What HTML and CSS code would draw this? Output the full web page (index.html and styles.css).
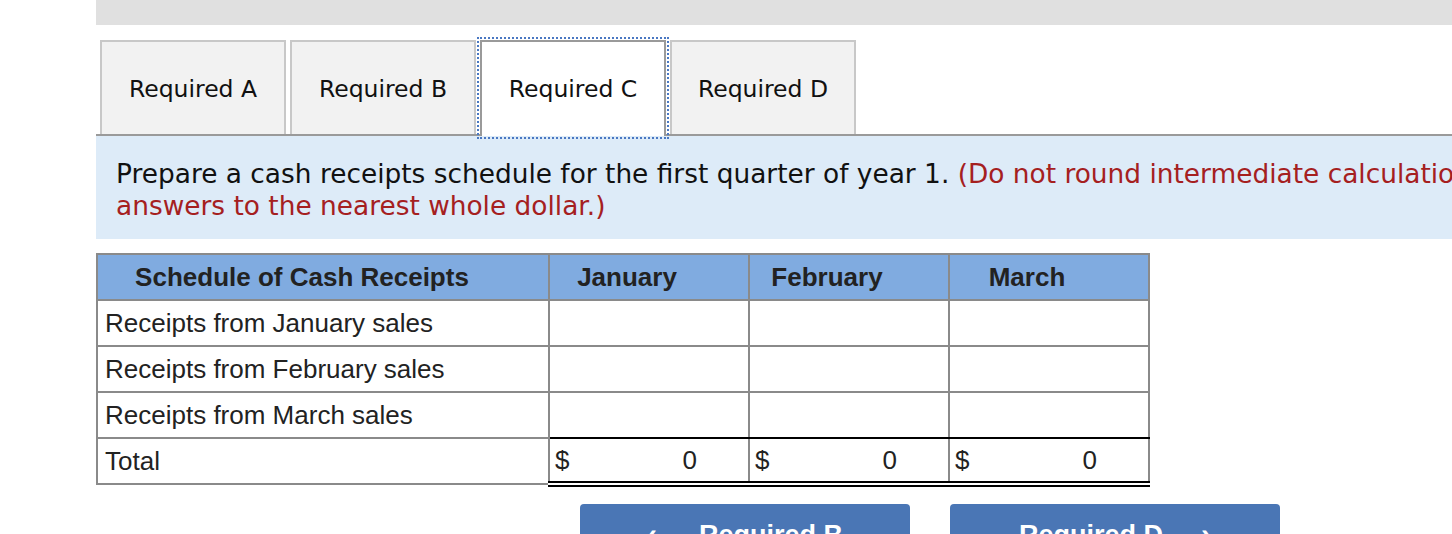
FILE: index.html
```html
<!DOCTYPE html>
<html lang="en">
<head>
<meta charset="utf-8">
<title>Cash receipts schedule</title>
<link rel="stylesheet" href="styles.css">
</head>
<body>
<div class="page">
  <div class="topbar"></div>
  <div class="tabs">
    <div class="tab">Required A</div>
    <div class="tab">Required B</div>
    <div class="tab active">Required C</div>
    <div class="tab">Required D</div>
  </div>
  <div class="panel">
    <p class="instructions">Prepare a cash receipts schedule for the first quarter of year 1. <span class="note">(Do not round intermediate calculations. Round your final<br>answers to the nearest whole dollar.)</span></p>
  </div>
  <table class="schedule">
    <thead>
      <tr>
        <th class="label">Schedule of Cash Receipts</th>
        <th class="val">January</th>
        <th class="val">February</th>
        <th class="val">March</th>
      </tr>
    </thead>
    <tbody>
      <tr>
        <td class="label">Receipts from January sales</td>
        <td class="val"></td><td class="val"></td><td class="val"></td>
      </tr>
      <tr>
        <td class="label">Receipts from February sales</td>
        <td class="val"></td><td class="val"></td><td class="val"></td>
      </tr>
      <tr class="pre-total">
        <td class="label">Receipts from March sales</td>
        <td class="val"></td><td class="val"></td><td class="val"></td>
      </tr>
      <tr class="total">
        <td class="label">Total</td>
        <td class="val"><span class="cur">$</span><span class="amt">0</span></td>
        <td class="val"><span class="cur">$</span><span class="amt">0</span></td>
        <td class="val"><span class="cur">$</span><span class="amt">0</span></td>
      </tr>
    </tbody>
  </table>
  <div class="nav">
    <button class="navbtn"><span class="chev">&#8249;</span>Required B</button>
    <button class="navbtn">Required D<span class="chev right">&#8250;</span></button>
  </div>
</div>
</body>
</html>
```
FILE: styles.css
```css
html, body {
  margin: 0;
  padding: 0;
  overflow: hidden;
  background: #ffffff;
}

.page {
  margin-left: 96px;
  width: 1700px;
}

.topbar {
  height: 25px;
  background: #e0e0e0;
}

.tabs {
  display: flex;
  align-items: flex-start;
  gap: 4px;
  padding-left: 4px;
  margin-top: 15px;
  border-bottom: 2px solid #9a9a9a;
}

.tab {
  box-sizing: border-box;
  width: 186px;
  height: 94px;
  border: 2px solid #c8c8c8;
  border-bottom: 0;
  background: #f2f2f2;
  text-align: center;
  font-family: "DejaVu Sans", Verdana, sans-serif;
  font-size: 23.5px;
  line-height: 28px;
  padding-top: 33px;
  color: #111;
}

.tab.active {
  background: #ffffff;
  border-color: #9a9a9a;
  height: 96px;
  margin-bottom: -2px;
  outline: 2px dotted #4a78c2;
  outline-offset: 1px;
  position: relative;
  z-index: 2;
}

.panel {
  background: #ddebf8;
  padding: 22px 0 17px 20px;
}

.instructions {
  margin: 0;
  font-family: "DejaVu Sans", Verdana, sans-serif;
  font-size: 26.4px;
  line-height: 32px;
  color: #111;
  white-space: nowrap;
}

.note {
  color: #a5201f;
}

.schedule {
  margin-top: 14px;
  border-collapse: collapse;
  border: 2px solid #8a8a8a;
  font-family: "Liberation Sans", Arial, sans-serif;
  font-size: 26px;
  color: #222;
}

.schedule th,
.schedule td {
  border: 2px solid #8a8a8a;
  height: 46px;
  padding: 0;
  box-sizing: border-box;
}

.schedule th {
  background: #80abe0;
  font-weight: bold;
  text-align: center;
  padding-right: 44px;
}

.schedule .label {
  width: 452px;
}

.schedule td.label {
  padding-left: 7px;
  text-align: left;
}

.schedule th.label {
  padding-right: 42px;
}

.schedule .val {
  width: 200px;
}

.pre-total td.val {
  border-bottom: 2px solid #000;
}

.total td.val {
  border-top: 2px solid #000;
  border-bottom: 6px double #000;
  padding: 0 51px 0 5px;
  white-space: nowrap;
}

.cur {
  float: left;
}

.amt {
  float: right;
}

.total td.val::after {
  content: "";
  display: block;
  clear: both;
}

.nav {
  display: flex;
  gap: 40px;
  margin-top: 17px;
  margin-left: 484px;
}

.navbtn {
  width: 330px;
  height: 60px;
  border: 0;
  border-radius: 4px;
  background: #4a76b5;
  color: #ffffff;
  font-family: "Liberation Sans", Arial, sans-serif;
  font-weight: bold;
  font-size: 27px;
  line-height: 60px;
  padding: 0;
}

.chev {
  display: inline-block;
  margin-right: 42px;
  font-size: 30px;
}

.chev.right {
  margin-right: 0;
  margin-left: 38px;
}
```
